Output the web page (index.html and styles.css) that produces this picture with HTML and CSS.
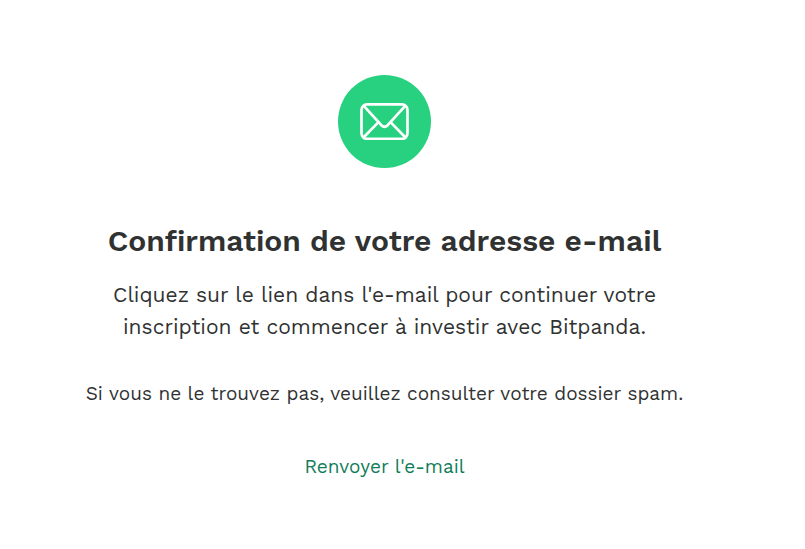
FILE: index.html
```html
<!DOCTYPE html>
<html lang="fr">
<head>
    <meta charset="UTF-8">
    <meta name="viewport" content="width=device-width, initial-scale=1.0">
    <title>Confirmation de votre adresse e-mail</title>
    <link rel="stylesheet" href="styles.css">
</head>
<body>
    <main class="confirmation">
        <div class="icon">
            <svg width="49" height="37" viewBox="0 0 49 37" fill="none" stroke="#fff" stroke-width="2.7" stroke-linecap="round" stroke-linejoin="round" aria-hidden="true">
                <rect x="1.5" y="1.4" width="46" height="34.4" rx="5.5"/>
                <path d="M4 3.2 L21.3 22.2 Q24.5 25.4 27.7 22.2 L45 3.2"/>
                <path d="M4 34 L18.3 19.4 M45 34 L30.7 19.4"/>
            </svg>
        </div>
        <h1>Confirmation de votre adresse e-mail</h1>
        <p class="intro">Cliquez sur le lien dans l'e-mail pour continuer votre inscription et commencer à investir avec Bitpanda.</p>
        <p class="spam">Si vous ne le trouvez pas, veuillez consulter votre dossier spam.</p>
        <a class="resend" href="#">Renvoyer l'e-mail</a>
    </main>
</body>
</html>
```

FILE: styles.css
```css
body {
    margin: 0;
    font-family: "Work Sans", Inter, sans-serif;
    color: #303232;
    background-color: #fff;
}
.confirmation {
    display: flex;
    flex-direction: column;
    align-items: center;
    padding: 75px 72px 60px 36px;
    text-align: center;
}
.icon {
    display: flex;
    align-items: center;
    justify-content: center;
    width: 93px;
    height: 93px;
    border-radius: 50%;
    background-color: #27d17f;
}
h1 {
    margin: 53px 0 18px;
    font-size: 30px;
    font-weight: 600;
    line-height: 40px;
}
.intro {
    max-width: 600px;
    margin: 0 0 35px;
    font-size: 21px;
    line-height: 32px;
}
.spam {
    margin: 0 0 41px;
    font-size: 19px;
    line-height: 32px;
}
.resend {
    font-size: 19px;
    line-height: 32px;
    color: #0f7d58;
    text-decoration: none;
}
.resend:hover {
    text-decoration: underline;
}
```
